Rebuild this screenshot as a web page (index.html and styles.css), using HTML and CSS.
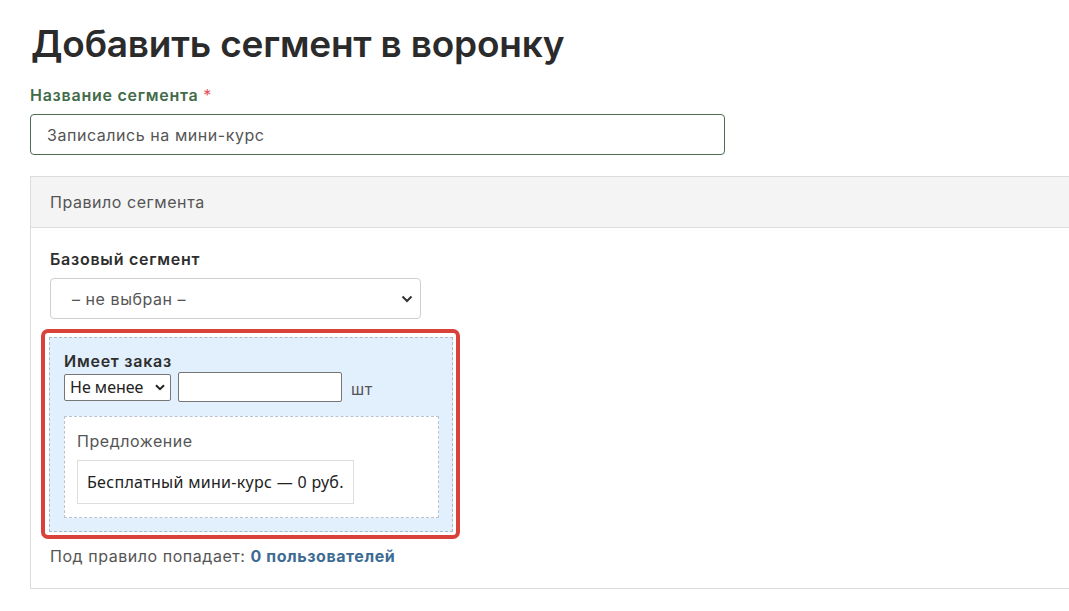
FILE: index.html
```html
<!DOCTYPE html>
<html lang="ru">
<head>
<meta charset="utf-8">
<link rel="stylesheet" href="styles.css">
</head>
<body>
<div class="page">
  <h1 class="title">Добавить сегмент в воронку</h1>
  <label class="field-label">Название сегмента <span class="req">*</span></label>
  <div class="text-input">Записались на мини-курс</div>

  <div class="panel">
    <div class="panel-head">Правило сегмента</div>
    <div class="panel-body">
      <div class="sub-label">Базовый сегмент</div>
      <div class="select-big">
        <span>– не выбран –</span>
        <svg class="chev" width="12" height="8" viewBox="0 0 12 8"><path d="M1.5 1.5 L6 6 L10.5 1.5" fill="none" stroke="#333" stroke-width="2"/></svg>
      </div>

      <div class="highlight">
        <div class="rule">
          <div class="rule-title">Имеет заказ</div>
          <div class="rule-row">
            <div class="select-small">
              <span>Не менее</span>
              <svg width="10" height="7" viewBox="0 0 10 7"><path d="M1 1.2 L5 5.2 L9 1.2" fill="none" stroke="#222" stroke-width="2"/></svg>
            </div>
            <div class="num-input"></div>
            <span class="unit">шт</span>
          </div>
          <div class="offer">
            <div class="offer-title">Предложение</div>
            <div class="offer-item">Бесплатный мини-курс — 0 руб.</div>
          </div>
        </div>
      </div>

      <div class="summary">Под правило попадает: <a class="count">0 пользователей</a></div>
    </div>
  </div>
</div>
</body>
</html>
```

FILE: styles.css
```css
html, body {
  margin: 0;
  padding: 0;
  background: #fff;
  overflow: hidden;
}
body {
  font-family: "Inter", "Noto Sans", sans-serif;
  color: #333;
  letter-spacing: 0.55px;
}
.page {
  padding: 0 0 0 30px;
  width: 1200px;
}
.title {
  margin: 22px 0 0 1px;
  font-size: 37px;
  line-height: 44px;
  font-weight: 600;
  color: #2b2b2b;
  letter-spacing: -0.2px;
}
.field-label {
  display: block;
  margin-top: 19px;
  font-size: 16px;
  line-height: 20px;
  font-weight: 600;
  color: #426b47;
  letter-spacing: 0.75px;
}
.req { color: #e05555; font-weight: 400; }
.text-input {
  margin-top: 9px;
  width: 661px;
  height: 39px;
  border: 1px solid #4e6a52;
  border-radius: 4px;
  padding: 0 16px;
  display: flex;
  align-items: center;
  font-size: 16px;
  color: #555;
}
.panel {
  margin-top: 21px;
  width: 1100px;
  border: 1px solid #dcdcdc;
}
.panel-head {
  height: 50px;
  background: #f4f4f4;
  border-bottom: 1px solid #dcdcdc;
  padding-left: 19px;
  display: flex;
  align-items: center;
  font-size: 16px;
  color: #555;
}
.panel-body {
  padding: 21px 19px 21px 19px;
}
.sub-label {
  font-size: 16px;
  font-weight: 600;
  color: #2e2e2e;
  line-height: 20px;
  letter-spacing: 0.75px;
}
.select-big {
  margin-top: 9px;
  height: 39px;
  border: 1px solid #cfcfcf;
  border-radius: 4px;
  display: flex;
  align-items: center;
  justify-content: space-between;
  padding: 0 7px 0 21px;
  width: 341px;
  font-size: 16px;
  color: #555;
}
.highlight {
  margin: 10px 0 0 -9px;
  width: 404px;
  border: 4px solid #d9413b;
  border-radius: 7px;
  padding: 4px 3px 3px 4px;
}
.rule {
  background: #e2effc;
  border: 1px dashed #aab8c9;
  padding: 14px 13px 13px 14px;
}
.rule-title {
  font-size: 16px;
  font-weight: 600;
  color: #2e2e2e;
  line-height: 18px;
  letter-spacing: 0.75px;
}
.rule-row {
  display: flex;
  align-items: center;
  margin-top: 2px;
}
.select-small {
  width: 95px;
  height: 25px;
  border: 1px solid #767676;
  border-radius: 2px;
  background: #fff;
  display: flex;
  align-items: center;
  justify-content: space-between;
  padding: 0 5px 0 5px;
  font-family: "Noto Sans", "Open Sans", sans-serif;
  font-size: 16px;
  letter-spacing: 0;
  color: #222;
}
.num-input {
  margin-left: 7px;
  width: 162px;
  height: 28px;
  border: 1px solid #767676;
  border-radius: 2px;
  background: #fff;
}
.unit {
  margin-left: 9px;
  margin-top: 3px;
  font-size: 16px;
  color: #555;
}
.offer {
  margin-top: 14px;
  background: #fff;
  border: 1px dashed #b8c3cf;
  padding: 12px 13px 13px 12px;
}
.offer-title {
  font-size: 16px;
  color: #555;
  line-height: 24px;
}
.offer-item {
  margin-top: 7px;
  display: inline-flex;
  align-items: center;
  height: 42px;
  padding: 0 9px;
  border: 1px solid #dedede;
  font-family: "Noto Sans", "Open Sans", sans-serif;
  font-size: 16px;
  letter-spacing: 0.3px;
  color: #222;
}
.summary {
  margin-top: 6px;
  font-size: 16px;
  color: #555;
  line-height: 22px;
}
.count {
  color: #3c6b93;
  font-weight: 700;
  text-decoration: none;
}
```
